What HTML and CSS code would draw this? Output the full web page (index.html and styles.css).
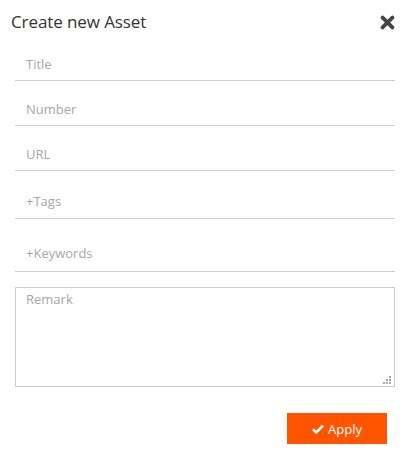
FILE: index.html
```html
<!DOCTYPE html>
<html>
<head>
<meta charset="utf-8">
<link rel="stylesheet" href="styles.css">
</head>
<body>
<div class="dialog">
  <div class="header">
    <h1 class="title">Create new Asset</h1>
    <button class="close" aria-label="Close">
      <svg width="15" height="15" viewBox="0 0 15 15"><path d="M2.6 2.6 L12.4 12.4 M12.4 2.6 L2.6 12.4" stroke="#444" stroke-width="3.8" stroke-linecap="round"/></svg>
    </button>
  </div>
  <form class="form">
    <div class="field"><input class="input" placeholder="Title"></div>
    <div class="field"><input class="input" placeholder="Number"></div>
    <div class="field"><input class="input" placeholder="URL"></div>
    <div class="field field-tags"><input class="input" placeholder="+Tags"></div>
    <div class="field field-keywords"><input class="input" placeholder="+Keywords"></div>
    <div class="remark-wrap">
      <textarea class="remark" placeholder="Remark"></textarea>
      <span class="grip"><i></i><i></i><i></i><i></i><i></i><i></i></span>
    </div>
    <div class="actions">
      <button type="button" class="apply">
        <svg width="12" height="10" viewBox="0 0 12 10"><path d="M1 5.2 L4.3 8.4 L11 1.6" fill="none" stroke="#fff" stroke-width="2.6"/></svg>
        <span>Apply</span>
      </button>
    </div>
  </form>
</div>
</body>
</html>
```
FILE: styles.css
```css
* { box-sizing: border-box; }
body {
  margin: 0;
  background: #fff;
  font-family: "Open Sans", "Noto Sans", sans-serif;
}
.dialog {
  width: 410px;
  padding: 0 15px;
}
.header {
  display: flex;
  align-items: center;
  justify-content: space-between;
  height: 44px;
  margin: 0 -15px 0 -4px;
  padding-right: 15px;
}
.title {
  margin: 0;
  font-size: 17px;
  font-weight: 400;
  color: #333;
  letter-spacing: -0.1px;
  line-height: 24px;
}
.close {
  border: 0;
  background: none;
  padding: 0;
  width: 15px;
  height: 15px;
  display: flex;
  margin-top: 1px;
}
.form {
  display: flex;
  flex-direction: column;
}
.field {
  border-bottom: 1px solid #d0d0d0;
  padding: 20px 0 8px;
}
.field:first-child { margin-top: -8px; }
.field-tags { padding-top: 22px; padding-bottom: 9px; }
.field-keywords { padding-top: 26px; padding-bottom: 10px; }
.input {
  display: block;
  width: 100%;
  border: 0;
  outline: none;
  padding: 0 0 0 11px;
  height: 16px;
  line-height: 16px;
  font-family: inherit;
  font-size: 13px;
  color: #333;
}
.input::placeholder, .remark::placeholder { color: #a9a6a6; }
.remark-wrap {
  position: relative;
  margin-top: 15px;
  height: 100px;
}
.remark {
  display: block;
  width: 100%;
  height: 100px;
  resize: none;
  border: 1px solid #cccccc;
  padding: 2px 10px;
  font-family: inherit;
  font-size: 13px;
  line-height: 18px;
  outline: none;
}
.grip {
  position: absolute;
  right: 4px;
  bottom: 3px;
  width: 8px;
  height: 8px;
  display: grid;
  grid-template-columns: repeat(3, 2px);
  grid-template-rows: repeat(3, 2px);
  gap: 1px;
}
.grip i { background: #a9a9a9; display: block; }
.grip i:nth-child(1) { grid-area: 1 / 3; }
.grip i:nth-child(2) { grid-area: 2 / 2; }
.grip i:nth-child(3) { grid-area: 2 / 3; }
.grip i:nth-child(4) { grid-area: 3 / 1; }
.grip i:nth-child(5) { grid-area: 3 / 2; }
.grip i:nth-child(6) { grid-area: 3 / 3; }
.actions {
  display: flex;
  justify-content: flex-end;
  margin-top: 26px;
  padding-right: 8px;
}
.apply {
  width: 100px;
  height: 31px;
  border: 0;
  background: #ff5500;
  color: #fff;
  font-family: inherit;
  font-size: 13px;
  display: flex;
  align-items: center;
  justify-content: center;
  gap: 4px;
  padding: 0;
}
```
